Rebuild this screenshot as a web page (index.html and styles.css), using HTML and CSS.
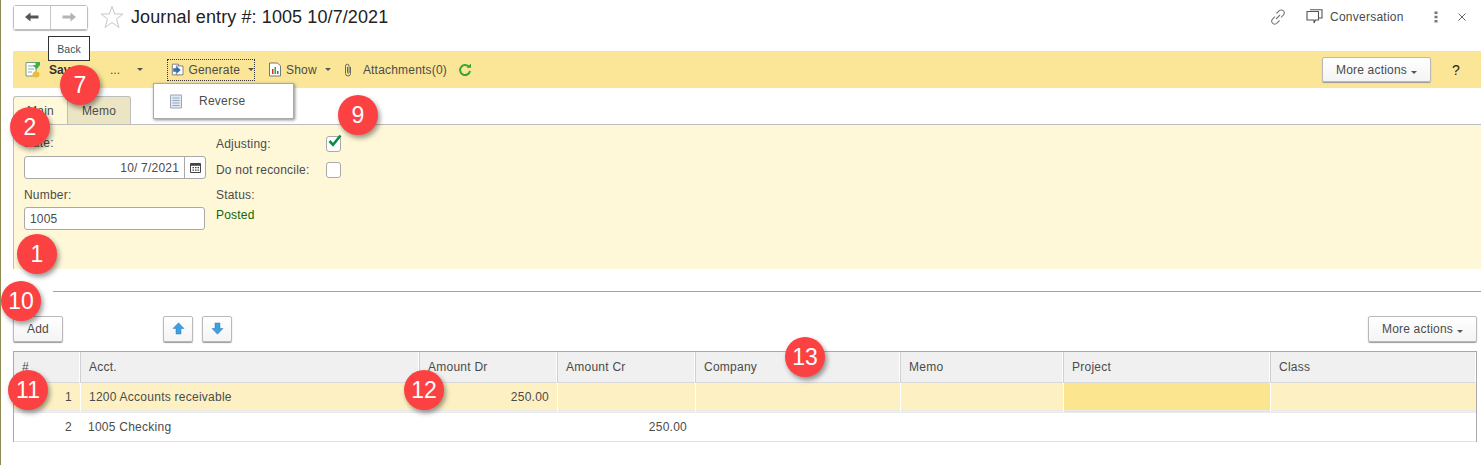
FILE: index.html
```html
<!DOCTYPE html>
<html lang="en">
<head>
<meta charset="utf-8">
<title>Journal entry</title>
<link rel="stylesheet" href="styles.css">
</head>
<body>
<div class="page">
  <header class="head">
    <div class="nav">
      <button class="nav-btn"><svg width="16" height="12" viewBox="0 0 16 12"><path d="M1 6 6.5 1.5V4.5H14.5V7.5H6.5V10.5Z" fill="#555"/></svg></button>
      <button class="nav-btn"><svg width="16" height="12" viewBox="0 0 16 12"><path d="M15 6 9.500 1.500V4.500H1.500V7.500H9.500V10.500Z" fill="#b4b4b4"/></svg></button>
    </div>
    <svg class="star" width="24" height="24" viewBox="0 0 24 24"><path d="M12 1.500 14.800 9H23L16.500 14 19 22.500 12 17.500 5 22.500 7.500 14 1 9H9.200Z" fill="#fff" stroke="#c8c8c8"/></svg>
    <h1 class="title">Journal entry #: 1005 10/7/2021</h1>
    <div class="head-right">
      <svg class="link" width="16" height="16" viewBox="0 0 16 16" fill="none" stroke="#777" stroke-width="1.100"><path d="M6.500 4.500 9 2a2.800 2.800 0 0 1 4.500 3.800L11 8.500"/><path d="M9.500 11.500 7 14a2.800 2.800 0 0 1-4.500-3.800L5 7.500"/><path d="M6 10 10 6"/></svg>
      <span class="conv"><svg width="17" height="16" viewBox="0 0 17 16" fill="none" stroke="#555" stroke-width="1.100"><path d="M3.500 2.500H12.500V11H9.500L8 14V11H1V2.500H3.500"/><path d="M4 .7H16V9H13"/></svg>Conversation</span>
      <svg class="dots" width="4" height="12" viewBox="0 0 4 12"><path d="M.5.500h3v2.500h-3zM.5 4.800h3v2.500h-3zM.5 9h3v2.500h-3z" fill="#777"/></svg>
      <svg class="close" width="8" height="8" viewBox="0 0 8 8"><path d="M.5.500 7.500 7.500M7.500.5 .5 7.500" stroke="#666" fill="none"/></svg>
    </div>
  </header>

  <div class="toolbar">
    <svg class="tool-icon" width="16" height="17" viewBox="0 0 16 17"><path d="M1 1.500H11V15H1Z" fill="#fff" stroke="#7a9a7a"/><path d="M3 5H9M3 8H9M3 11H7" stroke="#8aa"/><path d="M8 4H11V1H15V4L11.500 8.500Z" fill="#3fae49"/><ellipse cx="11" cy="13.500" rx="3.500" ry="3" fill="#e9bd3a"/></svg>
    <strong class="save">Save</strong>
    <span class="ellipsis">...</span>
    <i class="caret save-caret"></i>
    <span class="tool focus"><svg width="15" height="15" viewBox="0 0 15 15"><path d="M1.500 1.500H8.500V13.500H1.500Z" fill="#fff" stroke="#777"/><path d="M6 3.500H13.500V13.500H6Z" fill="#fff" stroke="#777"/><path d="M2.500 6H6.500V4L11 8 6.500 12V10H2.500Z" fill="#2f6fb5"/></svg>Generate<i class="caret"></i></span>
    <span class="tool show"><svg width="14" height="15" viewBox="0 0 14 15"><path d="M1.500 1H9.500L12.500 4V14H1.500Z" fill="#fff" stroke="#777"/><path d="M4 7h1.500v5H4z" fill="#c33"/><path d="M6.500 5h1.500v7H6.500z" fill="#3a3"/><path d="M9 9h1.500v3H9z" fill="#36b"/></svg>Show<i class="caret"></i></span>
    <span class="tool attach"><svg width="8" height="14" viewBox="0 0 8 14" fill="none" stroke="#666"><path d="M6.500 4V10.500a2.500 2.500 0 0 1-5 0V3a1.800 1.800 0 0 1 3.600 0V9.500a.8.800 0 0 1-1.600 0V4"/></svg>Attachments(0)</span>
    <svg class="refresh" width="14" height="14" viewBox="0 0 14 14" fill="none"><path d="M11.200 4.200A5 5 0 1 0 12 8" stroke="#3aa335" stroke-width="2"/><path d="M8.500 4.800H13V.5Z" fill="#3aa335"/></svg>
    <button class="btn more-top">More actions<i class="caret"></i></button>
    <span class="help">?</span>
  </div>

  <div class="tabs">
    <span class="tab active">Main</span>
    <span class="tab">Memo</span>
  </div>

  <section class="panel">
    <div class="col-a">
      <label class="lbl">Date:</label>
      <div class="input date"><span class="val">10/ 7/2021</span><span class="cal"><svg width="11" height="11" viewBox="0 0 11 11"><path d="M.500 1.500H10.500V10.500H.5Z" fill="#fff" stroke="#444"/><path d="M.5 1.500H10.500V3.800H.5Z" fill="#444"/><path d="M2.500 5h1.500v1.300H2.500zM5 5h1.500v1.300H5zM7.500 5H9v1.300H7.500zM2.500 7.500h1.500v1.300H2.500zM5 7.500h1.500v1.300H5zM7.500 7.500H9v1.300H7.500z" fill="#444"/></svg></span></div>
      <label class="lbl num-lbl">Number:</label>
      <div class="input number">1005</div>
    </div>
    <div class="col-b">
      <div class="check-row"><span class="check-lbl">Adjusting:</span><span class="box"><svg width="16" height="14" viewBox="0 0 16 14"><path d="M2.500 7 6 10.800 13.500 1.500" fill="none" stroke="#0f8a43" stroke-width="2.600"/></svg></span></div>
      <div class="check-row"><span class="check-lbl">Do not reconcile:</span><span class="box"></span></div>
      <div class="status-lbl">Status:</div>
      <div class="status">Posted</div>
    </div>
  </section>

  <div class="splitter"></div>

  <div class="table-bar">
    <button class="btn add">Add</button>
    <button class="btn arrow up"><svg width="13" height="13" viewBox="0 0 13 13"><path d="M6.500 .8 12 6.500H9V12H4V6.500H1Z" fill="#3f9fe0" stroke="#2c7fb8" stroke-width=".5"/></svg></button>
    <button class="btn arrow"><svg width="13" height="13" viewBox="0 0 13 13"><path d="M6.500 12.200 12 6.500H9V1H4V6.500H1Z" fill="#3f9fe0" stroke="#2c7fb8" stroke-width=".5"/></svg></button>
    <button class="btn more-table">More actions<i class="caret"></i></button>
  </div>

  <table class="grid">
    <colgroup>
      <col class="c1"><col class="c2"><col class="c3"><col class="c4"><col class="c5"><col class="c6"><col class="c7"><col class="c8">
    </colgroup>
    <thead>
      <tr><th>#</th><th>Acct.</th><th>Amount Dr</th><th>Amount Cr</th><th>Company</th><th>Memo</th><th>Project</th><th>Class</th></tr>
    </thead>
    <tbody>
      <tr class="sel"><td class="r">1</td><td>1200 Accounts receivable</td><td class="r">250.00</td><td></td><td></td><td></td><td class="cur"></td><td></td></tr>
      <tr><td class="r">2</td><td>1005 Checking</td><td></td><td class="r">250.00</td><td></td><td></td><td></td><td></td></tr>
    </tbody>
  </table>

  <div class="tooltip">Back</div>
  <div class="menu"><svg width="14" height="15" viewBox="0 0 14 15"><path d="M1.500 1H12.500V14H1.500Z" fill="#dfe8f2" stroke="#9aa9ba"/><path d="M3.500 4H10.500M3.500 6.500H10.500M3.500 9H10.500M3.500 11.500H10.500" stroke="#9aa9ba"/></svg><span>Reverse</span></div>

  <span class="badge b7">7</span>
  <span class="badge b2">2</span>
  <span class="badge b9">9</span>
  <span class="badge b1">1</span>
  <span class="badge b10">10</span>
  <span class="badge b11">11</span>
  <span class="badge b12">12</span>
  <span class="badge b13">13</span>
</div>
</body>
</html>
```
FILE: styles.css
```css
* { box-sizing: border-box; }
html, body { margin: 0; padding: 0; background: #fff; }
body { font-family: "Liberation Sans", Arial, sans-serif; font-size: 12px; color: #4b4b4b; overflow: hidden; }
.page { position: relative; width: 1481px; height: 465px; padding-left: 13px; border-left: 1px solid #8f8a55; margin-left: 0; overflow: hidden; }
.page { padding-left: 12px; }
button { font: inherit; color: inherit; }

.head { display: flex; align-items: center; height: 51px; padding-bottom: 18px; padding-top: 1px; }
.nav { display: flex; width: 75px; height: 25px; border: 1px solid #bdbdbd; border-radius: 3px; box-shadow: 0 1px 1px #bbb; }
.nav-btn { flex: 1; border: 0; background: #fff; padding: 0; display: flex; align-items: center; justify-content: center; }
.nav-btn + .nav-btn { border-left: 1px solid #c8c8c8; }
.star { margin-left: 12px; }
.title { margin: 0 0 0 7px; font-size: 18px; font-weight: 400; color: #222; letter-spacing: .1px; }
.head-right { margin-left: auto; display: flex; align-items: center; padding-right: 0; width: 209px; height: 20px; margin-right: 2px; }
.link { margin-left: 0; }
.conv { display: flex; align-items: center; gap: 7px; margin-left: 20px; letter-spacing: .25px; }
.dots { margin-left: 30px; }
.close { margin-left: 20px; }

.toolbar { display: flex; align-items: center; height: 37px; background: #fbe698; padding-left: 12px; margin-right: 0; }
.tool-icon { flex: none; }
.save { margin-left: 8px; color: #333; }
.ellipsis { margin-left: 33px; }
.save-caret { margin-left: 14px; }
.tool { display: flex; align-items: center; gap: 4px; letter-spacing: .2px; }
.focus { margin-left: 24px; height: 22px; width: 88px; padding-left: 3px; border: 1px dotted #333; }
.show { margin-left: 13px; }
.attach { margin-left: 13px; gap: 11px; }
.refresh { margin-left: 11px; }
.caret { display: inline-block; width: 0; height: 0; margin-left: 4px; border: 3px solid transparent; border-top-color: #555; border-bottom: 0; }
.save-caret { margin-left: 17px; }
.btn { background: linear-gradient(#fff, #f4f4f4); border: 1px solid #b9b9b9; border-radius: 2px; box-shadow: 0 1px 1px #999; padding: 0; height: 25px; }
.more-top { margin-left: auto; width: 109px; height: 25px; letter-spacing: .2px; }
.help { width: 50px; text-align: center; font-size: 14px; color: #222; }

.tabs { display: flex; margin-top: 8px; height: 28px; }
.tab { width: 64px; border: 1px solid #bdbdbd; border-bottom: 0; border-radius: 3px 3px 0 0; background: #ebe5c3; display: flex; align-items: center; justify-content: center; letter-spacing: .2px; height: 28px; width: 64px; }
.tab.active { width: 54px; background: #fff9d9; border-right: 0; }

.panel { display: flex; height: 145px; margin-top: 0; background: #fff9d9; border-left: 1px solid #bdbdbd; border-top: 1px solid #bdbdbd; position: relative; margin-top: 0; margin-bottom: 0; padding-left: 10px; padding-top: 11px; }
.panel { background: linear-gradient(#fef8d8, #fef8d8); }
.lbl { display: block; height: 16px; letter-spacing: .2px; }
.col-a { width: 192px; }
.input { background: #fff; border: 1px solid #a9a9a9; border-radius: 3px; height: 23px; display: flex; align-items: center; letter-spacing: .2px; }
.date { margin-top: 4px; width: 182px; justify-content: flex-end; }
.val { padding-right: 5px; }
.cal { width: 21px; height: 21px; border-left: 1px solid #a9a9a9; display: flex; align-items: center; justify-content: center; }
.num-lbl { margin-top: 9px; }
.number { margin-top: 3px; width: 181px; padding-left: 5px; }
.check-row { display: flex; align-items: center; height: 26px; letter-spacing: .2px; }
.col-b { margin-top: -5px; }
.check-lbl { width: 110px; }
.box { width: 15px; height: 16px; border: 1px solid #a9a9a9; border-radius: 3px; background: #fff; display: flex; position: relative; }
.box svg { position: absolute; left: 0; top: -3px; }
.status-lbl { margin-top: 5px; height: 20px; letter-spacing: .2px; }
.status { color: #116611; letter-spacing: .2px; }

.splitter { height: 1px; margin: 22px 0 0 40px; background: #a3a3a3; }

.table-bar { display: flex; align-items: center; height: 27px; margin-top: 23px; }
.add { width: 50px; height: 26px; letter-spacing: .2px; }
.arrow { width: 30px; height: 26px; display: flex; align-items: center; justify-content: center; }
.up { margin-left: 100px; }
.arrow + .arrow { margin-left: 9px; }
.more-table { margin-left: auto; width: 109px; height: 26px; margin-right: 4px; letter-spacing: .2px; }

.grid { margin-top: 9px; width: 1464px; border-collapse: separate; border-spacing: 0; table-layout: fixed; border-top: 1px solid #a9a9a9; border-left: 1px solid #a9a9a9; border-right: 1px solid #a9a9a9; letter-spacing: .25px; }
.c1 { width: 66px; } .c2 { width: 339px; } .c3 { width: 138px; } .c4 { width: 138px; } .c5 { width: 205px; } .c6 { width: 163px; } .c7 { width: 207px; } .c8 { width: 206px; }
th { height: 31px; background: #f0f0f0; font-weight: 400; text-align: left; padding: 0 8px; border-right: 1px solid #fff; border-bottom: 1px solid #d9d9d9; border-left: 1px solid #d0d0d0; }
th:first-child { border-left: 0; }
td { height: 29px; padding: 0 8px; border-bottom: 1px solid #e3e3e3; }
.sel td { height: 30px; background: #fdf1c4; border-left: 1px solid #fff; border-bottom: 3px double #eaeaea; }
.sel td:first-child { border-left: 0; }
.sel .cur { background: #fbe58f; }
.r { text-align: right; }

.tooltip { position: absolute; left: 47px; top: 36px; width: 42px; height: 25px; background: #fff; border: 1px solid #333; display: flex; align-items: center; justify-content: center; font-size: 10.500px; color: #2d5566; }
.menu { position: absolute; left: 152px; top: 83px; width: 141px; height: 36px; background: #fff; border: 1px solid #aaa; box-shadow: 1px 1px 3px #888; display: flex; align-items: center; padding-left: 15px; gap: 16px; letter-spacing: .25px; }

.badge { position: absolute; width: 40px; height: 40px; border-radius: 50%; background: #fb4142; color: #fff; font-size: 23px; display: flex; align-items: center; justify-content: center; box-shadow: 2px 3px 5px rgba(0,0,0,.4); }
.b7 { left: 59px; top: 65px; }
.b2 { left: 9px; top: 107px; }
.b9 { left: 337px; top: 95px; }
.b1 { left: 16px; top: 234px; }
.b10 { left: 0; top: 281px; }
.b11 { left: 7px; top: 370px; }
.b12 { left: 403px; top: 370px; }
.b13 { left: 784px; top: 337px; }
```
